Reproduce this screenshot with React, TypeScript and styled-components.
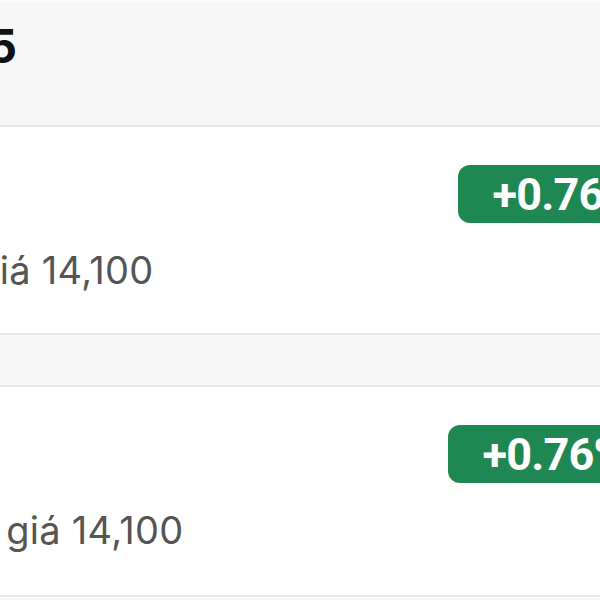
import React, { FC } from "react";
import styled, { createGlobalStyle } from "styled-components";

const GlobalStyle = createGlobalStyle`
  html, body {
    margin: 0;
    padding: 0;
    background: #f7f7f7;
    font-family: Inter, "Noto Sans", "Liberation Sans", sans-serif;
  }
`;

const Screen = styled.div`
  width: 600px;
  height: 600px;
  overflow: hidden;
  background: #f7f7f7;
  border-top: 2px solid #fdfdfd;
  box-sizing: border-box;
`;

const Header = styled.div`
  height: 125px;
  display: flex;
  align-items: flex-start;
  padding-top: 18px;
  box-sizing: border-box;
  border-bottom: 2px solid #e7e7e7;
`;

const Title = styled.h1`
  margin: 0 0 0 -104px;
  font-size: 47px;
  font-weight: 700;
  line-height: 1.1;
  color: #111;
  white-space: nowrap;
`;

const Gap = styled.div`
  height: 50px;
  border-bottom: 2px solid #e7e7e7;
`;

const Card = styled.div<{ $height: number }>`
  height: ${p => p.$height}px;
  background: #fff;
  display: flex;
  flex-direction: column;
  padding-top: 38px;
  box-sizing: border-box;
  border-bottom: 2px solid #e7e7e7;
`;

const TopLine = styled.div`
  display: flex;
  justify-content: flex-end;
`;

const Badge = styled.span<{ $trail: number }>`
  display: inline-flex;
  align-items: center;
  height: 58px;
  padding: 0 30px 0 35px;
  margin-right: ${p => p.$trail}px;
  border-radius: 12px;
  background: #1e8752;
  color: #fff;
  font-family: Roboto, "Liberation Sans", sans-serif;
  font-size: 45px;
  font-weight: 700;
  letter-spacing: -0.8px;
  white-space: nowrap;
`;

const Sub = styled.div<{ $shift: number; $space: number }>`
  margin-top: ${p => p.$space}px;
  margin-left: ${p => p.$shift}px;
  font-size: 38px;
  line-height: 46px;
  letter-spacing: 0.3px;
  color: #555;
  white-space: nowrap;
`;

type Order = {
  change: string;
  price: string;
  shift: number;
  trail: number;
  space: number;
  height: number;
};

const orders: Order[] = [
  { change: "+0.76%", price: "Khớp giá 14,100", shift: -130, trail: -66, space: 24, height: 208 },
  { change: "+0.76%", price: "Khớp giá 14,100", shift: -100, trail: -56, space: 24, height: 210 },
];

const OrderCard: FC<{ order: Order }> = ({ order }) => (
  <Card $height={order.height}>
    <TopLine>
      <Badge $trail={order.trail}>{order.change}</Badge>
    </TopLine>
    <Sub $shift={order.shift} $space={order.space}>
      {order.price}
    </Sub>
  </Card>
);

const App: FC = () => (
  <>
    <GlobalStyle />
    <Screen>
      <Header>
        <Title>2025</Title>
      </Header>
      <OrderCard order={orders[0]} />
      <Gap />
      <OrderCard order={orders[1]} />
    </Screen>
  </>
);

export default App;
